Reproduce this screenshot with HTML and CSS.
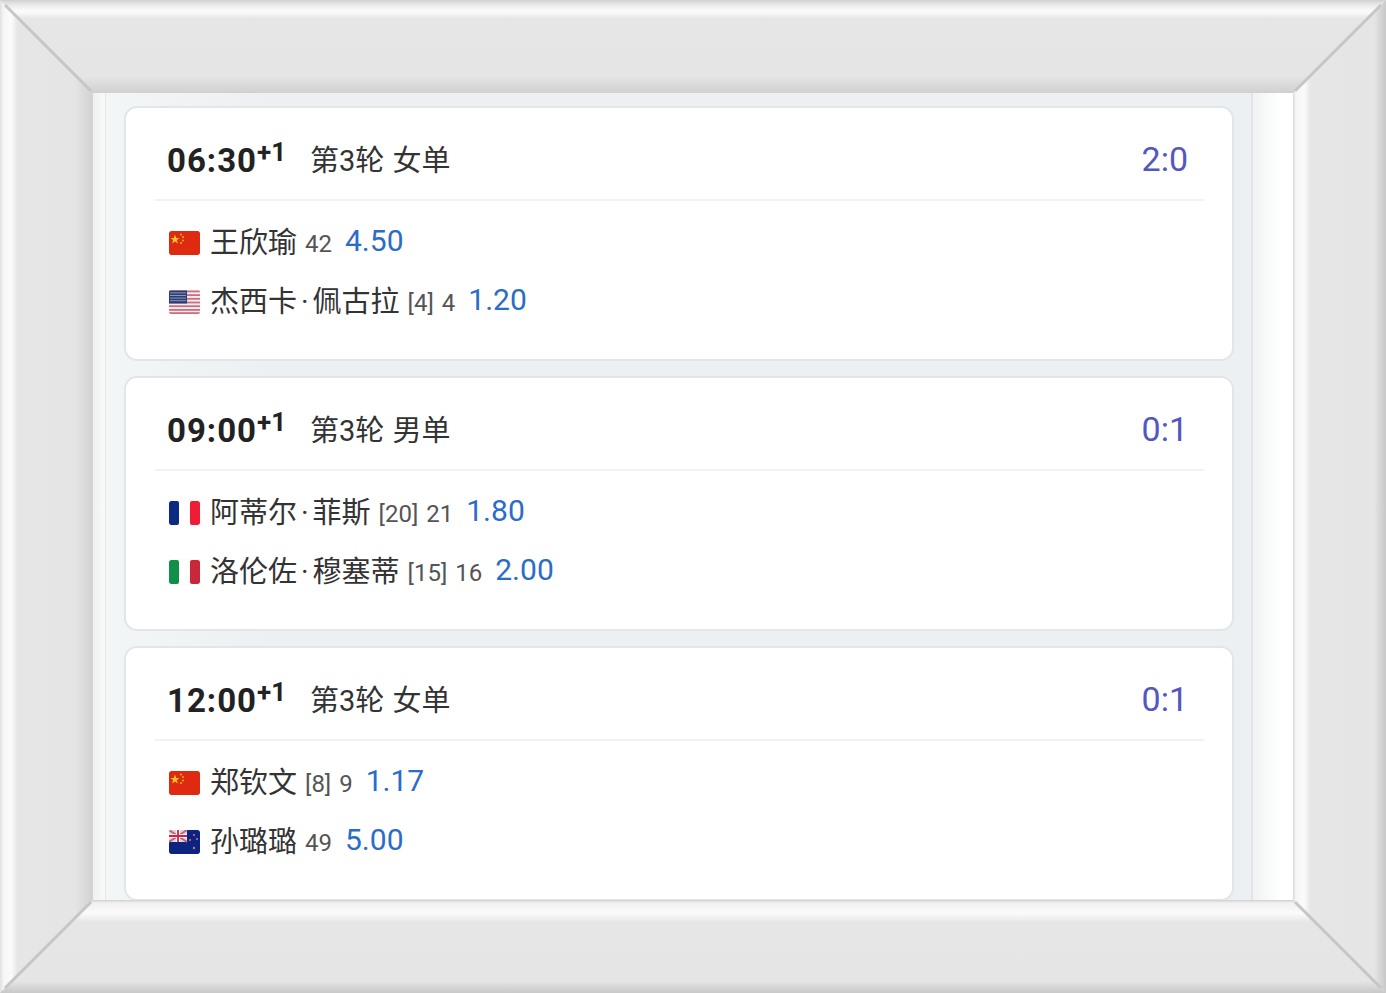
FILE: index.html
```html
<!DOCTYPE html>
<html lang="zh-CN">

<head>
    <meta charset="utf-8">
    <title>赛程</title>
    <link rel="stylesheet" href="styles.css">
</head>

<body>
    <svg width="0" height="0" class="defs">
        <symbol id="flag-cn" viewBox="0 0 31 24">
            <rect width="31" height="24" rx="2" fill="#dd2a10" />
            <polygon points="6,3.5 7.2,7 10.6,7 7.9,9.1 8.9,12.4 6,10.4 3.1,12.4 4.1,9.1 1.4,7 4.8,7" fill="#f6c21c" />
            <circle cx="12" cy="3.5" r="1" fill="#f0b020" />
            <circle cx="14" cy="6" r="1" fill="#f0b020" />
            <circle cx="14" cy="9.5" r="1" fill="#f0b020" />
            <circle cx="12" cy="12" r="1" fill="#f0b020" />
        </symbol>
        <symbol id="flag-us" viewBox="0 0 31 24">
            <rect width="31" height="24" fill="#f6eef0" />
            <g fill="#c9707f">
                <rect y="0.5" width="31" height="1.8" />
                <rect y="4.2" width="31" height="1.8" />
                <rect y="7.9" width="31" height="1.8" />
                <rect y="11.6" width="31" height="1.8" />
                <rect y="15.3" width="31" height="1.8" />
                <rect y="19" width="31" height="1.8" />
                <rect y="22.2" width="31" height="1.8" />
            </g>
            <rect y="0.5" width="18" height="13" fill="#2c3c74" />
            <g fill="#8d97bb">
                <rect x="1" y="2.4" width="16" height="1" />
                <rect x="1" y="5" width="16" height="1" />
                <rect x="1" y="7.6" width="16" height="1" />
                <rect x="1" y="10.2" width="16" height="1" />
            </g>
        </symbol>
        <symbol id="flag-fr" viewBox="0 0 31 24">
            <rect width="10" height="24" rx="2" fill="#0c2a80" />
            <rect x="21" width="10" height="24" rx="2" fill="#ee1c35" />
        </symbol>
        <symbol id="flag-it" viewBox="0 0 31 24">
            <rect width="10" height="24" rx="2" fill="#0f8f48" />
            <rect x="21" width="10" height="24" rx="2" fill="#c8283a" />
        </symbol>
        <symbol id="flag-nz" viewBox="0 0 31 24">
            <rect width="31" height="24" rx="2" fill="#0c2480" />
            <rect width="18" height="12" fill="#d8d8e8" />
            <path d="M0 0L18 12M18 0L0 12" stroke="#c8607a" stroke-width="2" />
            <path d="M9 0V12M0 6H18" stroke="#fff" stroke-width="3.4" />
            <path d="M9 0V12M0 6H18" stroke="#c8283a" stroke-width="1.8" />
            <g fill="#d8707e">
                <circle cx="25" cy="5" r="1" />
                <circle cx="21" cy="10" r="1" />
                <circle cx="28" cy="9" r="1" />
                <circle cx="25" cy="18" r="1.2" />
            </g>
        </symbol>
    </svg>

    <div class="page">
        <div class="screen">
            <div class="gutter-left"></div>

            <div class="list">
                <div class="card">
                    <div class="card-head">
                        <span class="time">06:30<sup>+1</sup></span>
                        <span class="round">第3轮 女单</span>
                        <span class="score">2:0</span>
                    </div>
                    <div class="player">
                        <svg class="flag"><use href="#flag-cn" /></svg>
                        <span class="name">王欣瑜</span>
                        <span class="rank">42</span>
                        <span class="odds">4.50</span>
                    </div>
                    <div class="player">
                        <svg class="flag flag-soft"><use href="#flag-us" /></svg>
                        <span class="name">杰西卡<span class="dot">·</span>佩古拉</span>
                        <span class="rank">[4] 4</span>
                        <span class="odds">1.20</span>
                    </div>
                </div>

                <div class="card">
                    <div class="card-head">
                        <span class="time">09:00<sup>+1</sup></span>
                        <span class="round">第3轮 男单</span>
                        <span class="score">0:1</span>
                    </div>
                    <div class="player">
                        <svg class="flag flag-soft"><use href="#flag-fr" /></svg>
                        <span class="name">阿蒂尔<span class="dot">·</span>菲斯</span>
                        <span class="rank">[20] 21</span>
                        <span class="odds">1.80</span>
                    </div>
                    <div class="player">
                        <svg class="flag flag-soft"><use href="#flag-it" /></svg>
                        <span class="name">洛伦佐<span class="dot">·</span>穆塞蒂</span>
                        <span class="rank">[15] 16</span>
                        <span class="odds">2.00</span>
                    </div>
                </div>

                <div class="card">
                    <div class="card-head">
                        <span class="time">12:00<sup>+1</sup></span>
                        <span class="round">第3轮 女单</span>
                        <span class="score">0:1</span>
                    </div>
                    <div class="player">
                        <svg class="flag"><use href="#flag-cn" /></svg>
                        <span class="name">郑钦文</span>
                        <span class="rank">[8] 9</span>
                        <span class="odds">1.17</span>
                    </div>
                    <div class="player">
                        <svg class="flag"><use href="#flag-nz" /></svg>
                        <span class="name">孙璐璐</span>
                        <span class="rank">49</span>
                        <span class="odds">5.00</span>
                    </div>
                </div>
            </div>

            <div class="gutter-right"></div>
        </div>

        <!-- bevelled picture frame, sits over the screenshot -->
        <svg class="frame" viewBox="0 0 1386 993">
            <defs>
                <linearGradient id="bandTop" gradientUnits="userSpaceOnUse" x1="0" y1="0" x2="0" y2="93">
                    <stop offset="0" stop-color="#d0d0d0" />
                    <stop offset="0.04" stop-color="#e4e4e4" />
                    <stop offset="0.11" stop-color="#fafafa" />
                    <stop offset="0.14" stop-color="#f8f8f8" />
                    <stop offset="0.2" stop-color="#e6e6e6" />
                    <stop offset="0.82" stop-color="#e5e5e5" />
                    <stop offset="1" stop-color="#d0d0d0" />
                </linearGradient>
                <linearGradient id="bandLeft" gradientUnits="userSpaceOnUse" x1="0" y1="0" x2="93" y2="0">
                    <stop offset="0" stop-color="#e0e0e0" />
                    <stop offset="0.04" stop-color="#f6f6f6" />
                    <stop offset="0.12" stop-color="#fbfbfb" />
                    <stop offset="0.19" stop-color="#e6e6e6" />
                    <stop offset="0.8" stop-color="#e5e5e5" />
                    <stop offset="1" stop-color="#d2d2d2" />
                </linearGradient>
                <linearGradient id="bandRight" gradientUnits="userSpaceOnUse" x1="1293" y1="0" x2="1386" y2="0">
                    <stop offset="0" stop-color="#d8d8d8" />
                    <stop offset="0.03" stop-color="#f6f6f6" />
                    <stop offset="0.12" stop-color="#fbfbfb" />
                    <stop offset="0.19" stop-color="#e6e6e6" />
                    <stop offset="0.87" stop-color="#e5e5e5" />
                    <stop offset="1" stop-color="#c8c8c8" />
                </linearGradient>
                <linearGradient id="bandBottom" gradientUnits="userSpaceOnUse" x1="0" y1="900" x2="0" y2="993">
                    <stop offset="0" stop-color="#cfcfcf" />
                    <stop offset="0.03" stop-color="#f0f0f0" />
                    <stop offset="0.14" stop-color="#fbfbfb" />
                    <stop offset="0.24" stop-color="#e6e6e6" />
                    <stop offset="0.87" stop-color="#e5e5e5" />
                    <stop offset="1" stop-color="#c8c8c8" />
                </linearGradient>
            </defs>
            <polygon points="0,0 93,93 93,900 0,993" fill="url(#bandLeft)" />
            <polygon points="1386,0 1293,93 1293,900 1386,993" fill="url(#bandRight)" />
            <polygon points="0,0 1386,0 1293,93 93,93" fill="url(#bandTop)" />
            <polygon points="0,993 1386,993 1293,900 93,900" fill="url(#bandBottom)" />
            <g stroke="#c6c6c6" stroke-width="3">
                <line x1="5" y1="5" x2="91" y2="91" />
                <line x1="1381" y1="5" x2="1295" y2="91" />
                <line x1="5" y1="988" x2="91" y2="902" />
                <line x1="1381" y1="988" x2="1295" y2="902" />
            </g>
        </svg>
    </div>
</body>

</html>
```

FILE: styles.css
```css
* {
    box-sizing: border-box;
}

body {
    margin: 0;
    background-color: #e5e5e5;
    font-family: Roboto, "Noto Sans CJK SC", sans-serif;
}

.defs {
    position: absolute;
}

.page {
    position: relative;
    width: 1386px;
    height: 993px;
    padding: 93px;
}

.frame {
    position: absolute;
    top: 0;
    left: 0;
    width: 1386px;
    height: 993px;
}

.screen {
    display: flex;
    height: 807px;
    overflow: hidden;
    background-color: #fff;
}

.gutter-left {
    width: 13px;
    border-right: 1px solid #dfe5e9;
    background: linear-gradient(to right, #eef1f1, #f9fafa);
}

.gutter-right {
    flex: 1;
    border-left: 2px solid #dfe5e9;
    background: linear-gradient(to right, #f1f3f3, #fff 70%);
}

.list {
    width: 1145px;
    padding: 13px 17px 0 18px;
    background: linear-gradient(to right, #f3f6f6, #edf0f2 15%);
}

.card {
    height: 255px;
    margin-bottom: 15px;
    padding: 0 28px 0 29px;
    background-color: #fff;
    border: 2px solid #e0e6ea;
    border-radius: 13px;
}

.card-head {
    display: flex;
    align-items: center;
    height: 93px;
    margin-bottom: 9px;
    padding: 10px 16px 0 12px;
    border-bottom: 2px solid #f1f2f3;
}

.time {
    width: 143px;
    margin-top: 4px;
    font-size: 33px;
    font-weight: 700;
    letter-spacing: 1px;
    color: #222;
}

.time sup {
    position: relative;
    top: 1px;
    font-size: 26px;
    line-height: 0;
    letter-spacing: 0;
    vertical-align: super;
}

.round {
    flex: 1;
    margin-top: -2px;
    font-size: 29px;
    word-spacing: 1px;
    color: #333;
}

.score {
    font-size: 34px;
    font-weight: 400;
    color: #5557c0;
}

.player {
    display: flex;
    align-items: center;
    height: 59px;
    padding-left: 14px;
}

.flag {
    flex: none;
    width: 31px;
    height: 24px;
    margin-top: 6px;
    margin-right: 10px;
    border-radius: 2px;
}

.flag-soft {
    box-shadow: 0 0 2px #eef0f4;
}

.name {
    font-size: 29px;
    color: #333;
}

.dot {
    margin: 0 4px;
}

.rank {
    margin-left: 8px;
    margin-top: 9px;
    font-size: 24px;
    font-weight: 400;
    word-spacing: 2px;
    color: #555;
}

.odds {
    margin-top: 2px;
    margin-left: 13px;
    font-size: 30px;
    font-weight: 400;
    color: #2a6cc8;
}
```
